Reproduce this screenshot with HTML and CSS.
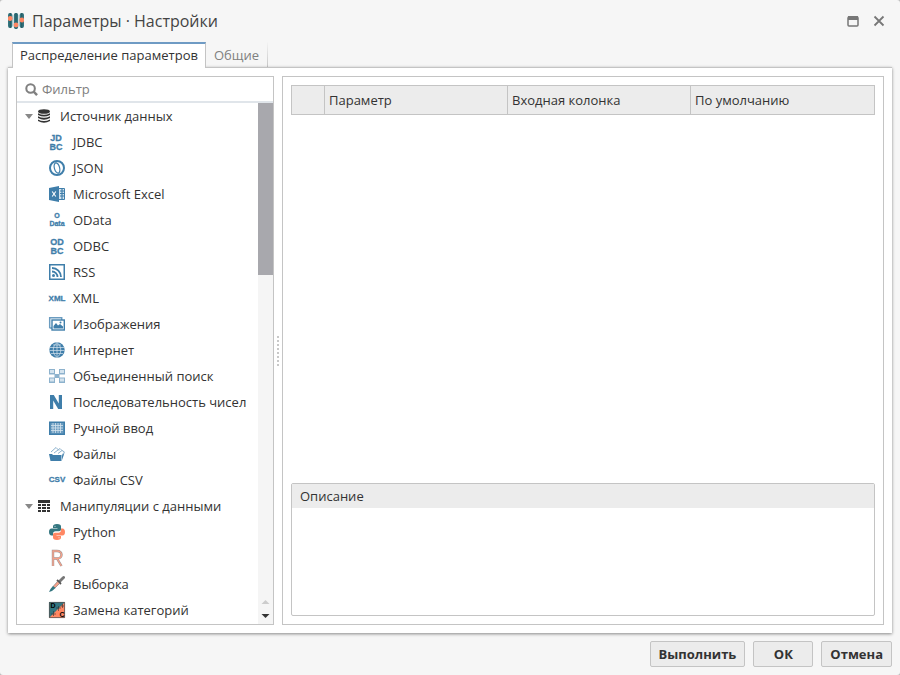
FILE: index.html
```html
<!DOCTYPE html>
<html lang="ru">
<head>
  <meta charset="utf-8">
  <title>Параметры · Настройки</title>
  <link rel="stylesheet" href="styles.css">
</head>
<body>
<div class="dialog">
  <header class="title-bar">
    <svg class="title-icon" width="16" height="18" viewBox="0 0 16 18">
      <g fill="#347680"><rect x="0" y="1" width="4.400" height="15" rx="2"/><rect x="5.800" y="1" width="4.400" height="16" rx="2"/><rect x="11.600" y="1" width="4.400" height="15" rx="2"/></g>
      <path d="M2.200 1v15M8 1v16M13.800 1v15" stroke="#24545c"/>
      <g fill="#ff8763"><circle cx="2.200" cy="6.500" r="2.400"/><circle cx="8" cy="13" r="2.400"/><circle cx="13.800" cy="8" r="2.400"/></g>
    </svg>
    <h1>Параметры · Настройки</h1>
    <button class="tool" type="button" aria-label="Развернуть">
      <svg width="12" height="11" viewBox="0 0 12 11"><rect x="1" y="1" width="10" height="9" fill="none" stroke="#777" stroke-width="1.500" rx="1"/><path d="M1 0h10v4H1z" fill="#777"/></svg>
    </button>
    <button class="tool" type="button" aria-label="Закрыть">
      <svg width="12" height="12" viewBox="0 0 12 12"><path d="M1.500 1.500l9 9M10.500 1.500l-9 9" stroke="#777" stroke-width="1.800"/></svg>
    </button>
  </header>

  <nav class="tabs">
    <button class="tab active" type="button">Распределение параметров</button>
    <button class="tab" type="button">Общие</button>
  </nav>

  <main class="content">
    <section class="tree-panel">
      <div class="filter">
        <svg width="13" height="13" viewBox="0 0 14 14"><circle cx="6" cy="6" r="4.600" fill="none" stroke="#808080" stroke-width="2.200"/><path d="M9 9l4 4" stroke="#808080" stroke-width="2.600"/></svg>
        <input type="text" placeholder="Фильтр" aria-label="Фильтр">
      </div>
      <div class="tree-body">
        <ul class="tree">
          <li>
            <div class="group"><span class="arrow"></span>
              <svg width="14" height="14" viewBox="0 0 14 14"><g fill="#333"><ellipse cx="7" cy="2.500" rx="6" ry="2.300"/><path d="M1 4.200q6 3 12 0v1.800q-6 3.200-12 0zM1 7.300q6 3 12 0v1.800q-6 3.200-12 0zM1 10.400q6 3 12 0v1.500q-6 3.600-12 0z"/></g></svg>
              Источник данных</div>
            <ul>
              <li><svg class="icon" viewBox="0 0 16 16"><text class="glyph g10"><tspan x="7" y="7">JD</tspan><tspan x="7" y="16">BC</tspan></text></svg>JDBC</li>
              <li><svg class="icon" viewBox="0 0 16 16"><circle cx="8" cy="8" r="7" fill="none" stroke="#3f7eaa" stroke-width="2"/><path d="M8 2.500c-3.500 1.500-3.500 9.500 0 11M8 2.500c3.500 1.500 3.500 9.500 0 11" fill="none" stroke="#3f7eaa" stroke-width="1.200" transform="rotate(-15 8 8)"/></svg>JSON</li>
              <li><svg class="icon" viewBox="0 0 16 16"><path d="M0 2l10-2v16L0 14z" fill="#3f7eaa"/><path d="M10 2.500h5.500v11H10" fill="#d4e3ee" stroke="#3f7eaa"/><path d="M11 5h4M11 7.500h4M11 10h4M13 3v10" stroke="#3f7eaa" stroke-width="1.200"/><path d="M3.200 5.500l3.600 5M6.800 5.500l-3.600 5" stroke="#fff" stroke-width="1.100"/></svg>Microsoft Excel</li>
              <li><svg class="icon" viewBox="0 0 16 16"><text class="glyph g7"><tspan x="8" y="6">O</tspan><tspan x="8" y="14">Data</tspan></text></svg>OData</li>
              <li><svg class="icon" viewBox="0 0 16 16"><text class="glyph g10"><tspan x="8" y="7">OD</tspan><tspan x="8" y="16">BC</tspan></text></svg>ODBC</li>
              <li><svg class="icon" viewBox="0 0 16 16"><rect x=".75" y=".75" width="14.500" height="14.500" fill="none" stroke="#3f7eaa" stroke-width="1.500"/><circle cx="4.500" cy="11.500" r="1.500" fill="#3f7eaa"/><path d="M3 7.500a5.500 5.500 0 0 1 5.500 5.500M3 4a9 9 0 0 1 9 9" fill="none" stroke="#3f7eaa" stroke-width="1.800"/></svg>RSS</li>
              <li><svg class="icon" viewBox="0 0 16 16"><text x="8" y="11" class="glyph g8">XML</text></svg>XML</li>
              <li><svg class="icon" viewBox="0 0 16 16"><path d="M.7 12V1.700h12V4M.5 12H3" fill="none" stroke="#6b9cc0" stroke-width="1.500"/><rect x="3" y="4" width="12.300" height="10" fill="#fff" stroke="#3f7eaa" stroke-width="1.400"/><path d="M4.500 12.500V10l2.500-3 2 2.500 2-1.500 3 2.500v2z" fill="#3f7eaa"/><circle cx="11.500" cy="6.500" r="1" fill="#3f7eaa"/></svg>Изображения</li>
              <li><svg class="icon" viewBox="0 0 16 16"><circle cx="8" cy="8" r="7.700" fill="#3f7eaa"/><path d="M1 5.500h14M.5 8.500h15M2 11.500h12M4 3h8M8 .5v15M8 .5C3 4 3 12 8 15.500M8 .5c5 3.500 5 11.500 0 15" fill="none" stroke="#d4e3ee" stroke-width=".7"/></svg>Интернет</li>
              <li><svg class="icon" viewBox="0 0 16 16"><path d="M4 4l8 8M12 4l-8 8" stroke="#3f7eaa"/><g fill="#d4e3ee" stroke="#8db2cd"><rect x=".5" y="1.500" width="5" height="4"/><rect x="10.500" y="1.500" width="5" height="4"/><rect x=".5" y="10" width="5" height="4"/><rect x="10.500" y="10" width="5" height="4"/></g><rect x="5.500" y="6" width="5" height="4" fill="#8db2cd"/><path d="M0 6h6M10 6h6M0 14.500h6M10 14.500h6" stroke="#8db2cd"/></svg>Объединенный поиск</li>
              <li><svg class="icon" viewBox="0 0 16 16"><path d="M1 15V1h3.800l5 8.500V1H13v14H9.200L4.200 6.500V15z" fill="#3f7eaa"/></svg>Последовательность чисел</li>
              <li><svg class="icon" viewBox="0 0 16 16"><rect x=".75" y="2.250" width="14.500" height="12" fill="#6b9cc0" stroke="#3f7eaa" stroke-width="1.500"/><path d="M2 5.500h12M2 8h12M2 10.500h12M4 3v10M6.500 3v10M9 3v10M11.500 3v10" stroke="#d4e3ee" stroke-width=".8"/></svg>Ручной ввод</li>
              <li><svg class="icon" viewBox="0 0 16 16"><path d="M2 6l5-4.500 3 3M5 7l6-4.500 2.500 2.500M9 7.500L13 4.500l2.500 1.500L13 9" fill="#fff" stroke="#8db2cd"/><path d="M0 8h3l1 1h8.500v6H1.500zM13 9.500l2.500-2.500L13 14z" fill="#3f7eaa"/></svg>Файлы</li>
              <li><svg class="icon" viewBox="0 0 16 16"><text x="8" y="10" class="glyph g8">CSV</text></svg>Файлы CSV</li>
            </ul>
          </li>
          <li>
            <div class="group"><span class="arrow"></span>
              <svg width="14" height="14" viewBox="0 0 14 14"><path d="M1 1h12v3H1zM1 5h3v2H1zM5 5h4v2H5zM10 5h3v2h-3zM1 8h3v2H1zM5 8h4v2H5zM10 8h3v2h-3zM1 11h3v2H1zM5 11h4v2H5zM10 11h3v2h-3z" fill="#333"/></svg>
              Манипуляции с данными</div>
            <ul>
              <li><svg class="icon" viewBox="0 0 16 16"><path d="M8 0C5 0 4 1 4 2.500V4h4.500v.5H2.500C.8 4.500 0 6 0 8s1 3.500 2.500 3.500H4V9.700c0-1.400 1-2.400 2.500-2.400H10c1.200 0 2-.8 2-2V2.500C12 1 11 0 8 0z" fill="#347680"/><path d="M8 16c3 0 4-1 4-2.500V12H7.500v-.5h6c1.700 0 2.500-1.500 2.500-3.500s-1-3.500-2.500-3.500H12v1.800c0 1.400-1 2.400-2.500 2.400H6c-1.200 0-2 .8-2 2v2.800C4 15 5 16 8 16z" fill="#ff8763"/><circle cx="6" cy="2.200" r=".5" fill="#fff"/><circle cx="10" cy="13.800" r=".5" fill="#fff"/></svg>Python</li>
              <li><svg class="icon" viewBox="0 0 16 16"><path d="M4 16V1h4c6 0 6 7.500 0 7.500H4M8 8.500l4.500 7.500" fill="none" stroke="#999" stroke-width="2.400"/><path d="M4 16V1h4c6 0 6 7.500 0 7.500H4M8 8.500l4.500 7.500" fill="none" stroke="#f5a18a" stroke-width="1.400"/></svg>R</li>
              <li><svg class="icon" viewBox="0 0 16 16"><path d="M9 5l4-4q2-2 3 0 .5 1-1 2l-4 4z" fill="#777"/><path d="M8 4l4 4" stroke="#555" stroke-width="1.800"/><path d="M8.500 5.500l2 2-4.500 4.500-2-1.500z" fill="#f5a18a" stroke="#777" stroke-width=".6"/><path d="M4 10l2.500 2L3 15l-3 1 1.500-3z" fill="#347680"/></svg>Выборка</li>
              <li><svg class="icon" viewBox="0 0 16 16"><path d="M0 0h16v16H0z" fill="#ff8763"/><path d="M0 0h16L0 16z" fill="#347680"/><path d="M.4.4h15.200v15.200H.4z" fill="none" stroke="#555" stroke-width=".8"/><path d="M7 6h5M9.500 4v5M2 12h5M4.500 9v5M12 4h3M13.500 2v4" stroke="#333" stroke-width=".6"/><text class="glyph dark"><tspan x="4" y="6">D</tspan><tspan x="13" y="15">C</tspan></text></svg>Замена категорий</li>
            </ul>
          </li>
        </ul>
        <div class="scrollbar">
          <div class="thumb"></div>
          <svg class="scroll-arrows" width="15" height="26" viewBox="0 0 15 26"><path d="M3.500 6l4-4 4 4z" fill="#ccc"/><path d="M3.500 16h8l-4 4z" fill="#333"/></svg>
        </div>
      </div>
    </section>

    <div class="splitter"><span class="grip"></span></div>

    <section class="detail-panel">
      <table class="grid">
        <colgroup><col class="col-mark"><col class="col-text"><col class="col-text"><col></colgroup>
        <thead>
          <tr><th></th><th>Параметр</th><th>Входная колонка</th><th>По умолчанию</th></tr>
        </thead>
      </table>
      <div class="description">
        <h2>Описание</h2>
      </div>
    </section>
  </main>

  <footer class="buttons">
    <button class="btn" type="button">Выполнить</button>
    <button class="btn btn-ok" type="button">ОК</button>
    <button class="btn" type="button">Отмена</button>
  </footer>
</div>
</body>
</html>
```
FILE: styles.css
```css
* {
    box-sizing: border-box;
}

body {
    margin: 0;
    background: #bbb;
    font-family: "Open Sans", "Noto Sans", sans-serif;
    font-size: 13px;
    line-height: 18px;
    color: #333;
}

button, input {
    font: inherit;
    color: inherit;
}

.dialog {
    display: flex;
    flex-direction: column;
    min-height: 100vh;
    padding: 0 8px 8px;
    background: #f6f6f6;
    border-radius: 3px;
}

.title-bar {
    display: flex;
    align-items: center;
    height: 42px;
    padding-right: 7px;
}

.title-bar h1 {
    flex: 1;
    margin: 0 0 0 8px;
    font-size: 16px;
    line-height: 24px;
    font-weight: normal;
    color: #444;
}

.tool {
    display: flex;
    padding: 0;
    margin-left: 14px;
    border: 0;
    background: none;
}

/* tabs */
.tabs {
    display: flex;
    height: 25px;
    padding-left: 4px;
}

.tab {
    padding: 1px 8px 0;
    border-style: solid;
    border-width: 0 1px 0 0;
    border-image: linear-gradient(#f6f6f6, #c4c4c4) 1;
    background: none;
    color: #808080;
}

.tab.active {
    position: relative;
    z-index: 1;
    margin-bottom: -1px;
    padding: 0 7px 2px;
    border: 1px solid #c4c4c4;
    border-image: none;
    border-top: 2px solid #6f9bc4;
    border-bottom: 0;
    background: #fff;
    color: #333;
}

.content {
    display: flex;
    flex: 1;
    padding: 8px;
    background: #fff;
    border-top: 1px solid #c4c4c4;
    box-shadow: 0 1px 3px rgba(0, 0, 0, 0.45);
}

/* component tree */
.tree-panel {
    display: flex;
    flex-direction: column;
    width: 258px;
    border: 1px solid #c4c4c4;
}

.filter {
    display: flex;
    align-items: center;
    height: 26px;
    padding-left: 8px;
    border-bottom: 2px solid #e0e5ea;
}

.filter input {
    flex: 1;
    min-width: 0;
    margin-left: 4px;
    padding: 0;
    border: 0;
    outline: 0;
}

.filter input::placeholder {
    color: #808080;
}

.tree-body {
    display: flex;
    flex: 1;
}

.tree, .tree ul {
    margin: 0;
    padding: 0;
    list-style: none;
}

.tree {
    flex: 1;
    white-space: nowrap;
}

.group, .tree ul li {
    display: flex;
    align-items: center;
    height: 26px;
}

.group {
    padding-left: 8px;
}

.group svg {
    margin: 0 9px 0 4px;
}

.arrow {
    border: 4px solid transparent;
    border-top: 5px solid #888;
    border-bottom: 0;
}

.tree ul li {
    padding-left: 32px;
}

.icon {
    width: 16px;
    height: 16px;
    margin-right: 8px;
    overflow: visible;
}

.glyph {
    font-family: "Liberation Sans", Arial, sans-serif;
    font-weight: bold;
    text-anchor: middle;
    fill: #3f7eaa;
}

.g7 {
    font-size: 7px;
}

.g8 {
    font-size: 8px;
}

.g10 {
    font-size: 9px;
}

.g7, .g8, .g10 {
    stroke: #3f7eaa;
    stroke-width: 0.3;
}

.dark {
    font-size: 7px;
    fill: #000;
}

.scrollbar {
    display: flex;
    flex-direction: column;
    justify-content: space-between;
    width: 15px;
    background: #f5f5f5;
}

.thumb {
    height: 33%;
    background: #a8a8ad;
}

.splitter {
    display: flex;
    align-items: center;
    justify-content: center;
    width: 8px;
}

.grip {
    width: 2px;
    height: 30px;
    background: repeating-linear-gradient(#c8c8c8 0 2px, #fff 2px 4px);
}

/* right side */
.detail-panel {
    display: flex;
    flex: 1;
    flex-direction: column;
    justify-content: space-between;
    padding: 8px;
    border: 1px solid #c4c4c4;
}

.grid {
    width: 100%;
    table-layout: fixed;
    border-collapse: collapse;
}

.col-mark {
    width: 33px;
}

.col-text {
    width: 183px;
}

.grid th {
    height: 29px;
    padding: 0 4px;
    border: 1px solid #c4c4c4;
    background: #ececec;
    font-weight: normal;
    text-align: left;
}

.description {
    height: 133px;
    border: 1px solid #c4c4c4;
    border-radius: 2px;
}

.description h2 {
    margin: 0;
    padding: 3px 8px;
    background: #ececec;
    font-size: 13px;
    line-height: 18px;
    font-weight: normal;
}

.buttons {
    display: flex;
    justify-content: flex-end;
    gap: 8px;
    padding-top: 8px;
}

.btn {
    height: 26px;
    padding: 0 8px;
    border: 1px solid #c4c4c4;
    border-radius: 2px;
    background: #ececec;
    font-weight: bold;
}

.btn-ok {
    min-width: 60px;
}
```
